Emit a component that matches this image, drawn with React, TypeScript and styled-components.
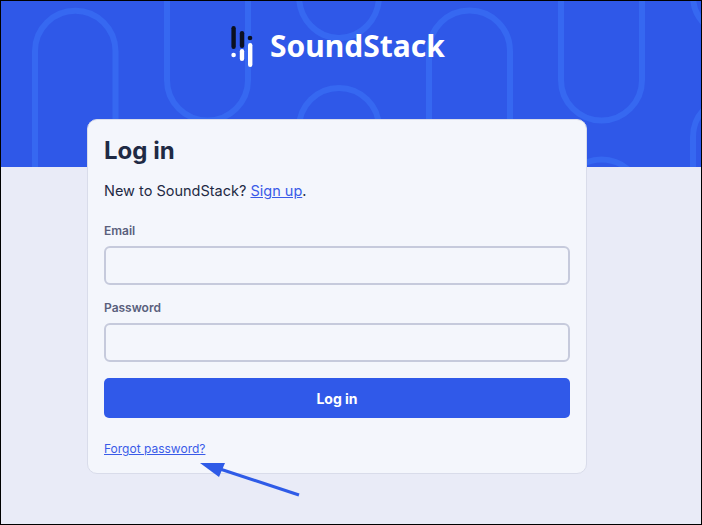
import React from 'react'
import styled, { createGlobalStyle } from 'styled-components'

const GlobalStyle = createGlobalStyle`
  html, body {
    margin: 0;
    padding: 0;
    background: #000;
  }
  * {
    box-sizing: border-box;
  }
`

const pills = [
  'M34 170V51a40 40 0 0 1 80.5 0V170',
  'M166 -4V80a40.5 40.5 0 0 0 81 0V-4',
  'M298 -4a40 42 0 0 0 80 0',
  'M298 170V128a40 40 0 0 1 80 0V170',
  'M428 170V51a40.5 40.5 0 0 1 81 0V170',
  'M560 -4V80a40.5 40.5 0 0 0 81 0V-4',
  'M560 200a40.5 40.5 0 0 1 81 0',
  'M692 170V137a40 40 0 0 1 80 0V170',
  'M692 -4a40 40 0 0 0 80 0',
]

const Logo: React.FC = () => (
  <LogoWrap>
    <svg width="22" height="42" viewBox="0 0 22 42" aria-hidden="true">
      <g fill="#0b1020">
        <rect x="0.4" y="0" width="4.4" height="23" rx="2.2" />
        <rect x="8.8" y="5" width="4.4" height="17" rx="2.2" />
        <circle cx="19" cy="12" r="2.3" />
      </g>
      <g fill="#fff">
        <circle cx="2.6" cy="29" r="2.3" />
        <rect x="8.8" y="23" width="4.4" height="12" rx="2.2" />
        <rect x="17" y="17" width="4.4" height="24" rx="2.2" />
      </g>
    </svg>
    <LogoText>SoundStack</LogoText>
  </LogoWrap>
)

const App: React.FC = () => {
  return (
    <Frame>
      <GlobalStyle />
      <Banner>
        <Pattern width="700" height="166" viewBox="0 1 700 166" aria-hidden="true">
          {pills.map((d) => (
            <path key={d} d={d} fill="none" stroke="#3668f1" strokeWidth="6" />
          ))}
        </Pattern>
        <Logo />
      </Banner>
      <Card>
        <Title>Log in</Title>
        <Intro>
          New to SoundStack? <Link href="#">Sign up</Link>.
        </Intro>
        <Form>
          <Field>
            <Label htmlFor="email">Email</Label>
            <Input type="email" id="email" />
          </Field>
          <Field>
            <Label htmlFor="password">Password</Label>
            <Input type="password" id="password" />
          </Field>
          <Button type="button">Log in</Button>
        </Form>
        <SmallLink href="#">Forgot password?</SmallLink>
      </Card>
      <Arrow width="110" height="42" viewBox="0 0 110 42" aria-hidden="true">
        <path d="M100 33L18 6" stroke="#2f5be7" strokeWidth="3.2" fill="none" />
        <path d="M1 1L26 1L20 15Z" fill="#2f5be7" />
      </Arrow>
    </Frame>
  )
}

const Frame = styled.div`
  position: relative;
  width: 702px;
  height: 525px;
  border: 1px solid #000;
  overflow: hidden;
  background: #e9ebf7;
  font-family: Inter, "Liberation Sans", sans-serif;
  color: #1f2a44;
`

const Banner = styled.header`
  position: relative;
  height: 166px;
  padding: 24px 26px 0 0;
  display: flex;
  justify-content: center;
  align-items: flex-start;
  background: #2f58e8;
`

const Pattern = styled.svg`
  position: absolute;
  top: 0;
  left: 0;
`

const LogoWrap = styled.div`
  position: relative;
  display: flex;
  align-items: flex-start;
  gap: 17px;
  height: 42px;
  padding-top: 1px;
`

const LogoText = styled.span`
  font-family: "Noto Sans", "Open Sans", sans-serif;
  font-size: 30px;
  font-weight: 700;
  line-height: 40px;
  color: #fff;
`

const Card = styled.main`
  position: relative;
  width: 500px;
  height: 355px;
  margin: -48px 0 0 86px;
  padding: 16px 16px 0;
  background: #f4f6fc;
  border: 1px solid #d9dcea;
  border-radius: 10px;
`

const Title = styled.h1`
  margin: 0;
  font-size: 24px;
  font-weight: 700;
  line-height: 30px;
  color: #1f2a44;
`

const Intro = styled.p`
  margin: 14px 0 0;
  font-size: 14.5px;
  line-height: 22px;
  color: #1f2a44;
`

const Link = styled.a`
  color: #3a5be8;
`

const Form = styled.form`
  display: flex;
  flex-direction: column;
  margin-top: 21px;
`

const Field = styled.div`
  display: flex;
  flex-direction: column;
  gap: 7px;
  margin-bottom: 15px;
`

const Label = styled.label`
  font-size: 12px;
  font-weight: 600;
  line-height: 16px;
  color: #5a607c;
`

const Input = styled.input`
  width: 466px;
  height: 39px;
  border: 2px solid #c6cadc;
  border-radius: 6px;
  background: #f4f6fc;
`

const Button = styled.button`
  width: 466px;
  height: 40px;
  margin-top: 1px;
  border: 0;
  border-radius: 5px;
  background: #3059e9;
  color: #fff;
  font-family: inherit;
  font-size: 14px;
  font-weight: 700;
`

const SmallLink = styled(Link)`
  display: inline-block;
  margin-top: 23px;
  font-size: 12px;
  line-height: 16px;
`

const Arrow = styled.svg`
  position: absolute;
  left: 198px;
  top: 461px;
`

export default App
